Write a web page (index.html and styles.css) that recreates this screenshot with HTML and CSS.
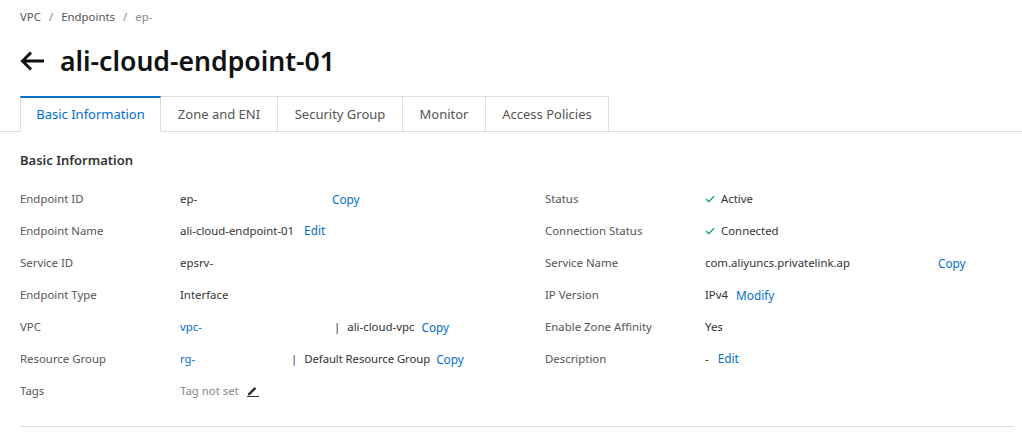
FILE: index.html
```html
<!DOCTYPE html>
<html lang="en">
<head>
<meta charset="utf-8">
<title>Endpoint</title>
<link rel="stylesheet" href="styles.css">
</head>
<body>
<nav class="crumbs"><span>VPC</span><span class="sep">/</span><span>Endpoints</span><span class="sep">/</span><span class="muted">ep-</span></nav>
<header class="title">
  <svg class="back" width="26" height="20" viewBox="0 0 26 20"><path d="M24 10H3M11 1.500L2.500 10l8.500 8.500" fill="none" stroke="#111" stroke-width="3"/></svg>
  <h1>ali-cloud-endpoint-01</h1>
</header>
<div class="tabs">
  <div class="tab active">Basic Information</div>
  <div class="tab">Zone and ENI</div>
  <div class="tab">Security Group</div>
  <div class="tab">Monitor</div>
  <div class="tab">Access Policies</div>
</div>
<h2>Basic Information</h2>
<section class="info">
  <div class="col">
    <div class="row"><div class="label">Endpoint ID</div><div class="value"><span class="w-id">ep-</span><a class="link copy">Copy</a></div></div>
    <div class="row"><div class="label">Endpoint Name</div><div class="value"><span>ali-cloud-endpoint-01</span><a class="link wide">Edit</a></div></div>
    <div class="row"><div class="label">Service ID</div><div class="value"><span>epsrv-</span></div></div>
    <div class="row"><div class="label">Endpoint Type</div><div class="value"><span>Interface</span></div></div>
    <div class="row"><div class="label">VPC</div><div class="value"><a class="link plain w-vpc">vpc-</a><span class="pipe">|</span><span>ali-cloud-vpc</span><a class="link copy">Copy</a></div></div>
    <div class="row"><div class="label">Resource Group</div><div class="value"><a class="link plain w-rg">rg-</a><span class="pipe purple">|</span><span class="tight">Default Resource Group</span><a class="link copy near">Copy</a></div></div>
    <div class="row"><div class="label">Tags</div><div class="value"><span class="muted">Tag not set</span>
      <svg class="pen" width="12" height="12" viewBox="0 0 12 12"><path d="M1 8.500 7.500 2l1.800 1.800L2.800 10.300H1zM0 11h12v1H0z" fill="#333"/></svg></div></div>
  </div>
  <div class="col">
    <div class="row"><div class="label">Status</div><div class="value"><svg class="check" width="10" height="8" viewBox="0 0 10 8"><path d="M1 4l2.800 2.800L9 1.200" fill="none" stroke="#16a870" stroke-width="1.300"/></svg><span>Active</span></div></div>
    <div class="row"><div class="label">Connection Status</div><div class="value"><svg class="check" width="10" height="8" viewBox="0 0 10 8"><path d="M1 4l2.800 2.800L9 1.200" fill="none" stroke="#16a870" stroke-width="1.300"/></svg><span>Connected</span></div></div>
    <div class="row"><div class="label">Service Name</div><div class="value"><span class="w-svc">com.aliyuncs.privatelink.ap</span><a class="link copy">Copy</a></div></div>
    <div class="row"><div class="label">IP Version</div><div class="value"><span>IPv4</span><a class="link copy modify">Modify</a></div></div>
    <div class="row"><div class="label">Enable Zone Affinity</div><div class="value"><span>Yes</span></div></div>
    <div class="row"><div class="label">Description</div><div class="value"><span>-</span><a class="link wide narrow">Edit</a></div></div>
  </div>
</section>
<hr class="rule">
</body>
</html>
```
FILE: styles.css
```css
* { box-sizing: border-box; }
html, body { margin: 0; }
body {
  width: 1022px;
  height: 432px;
  overflow: hidden;
  padding: 9px 0 0 20px;
  background: #fff;
  color: #333;
  font: 11.400px/16px "Noto Sans", "Open Sans", sans-serif;
}
.crumbs { display: flex; gap: 8px; height: 16px; color: #555; }
.crumbs .sep { color: #888; }
.muted { color: #888; }
.title { display: flex; align-items: center; gap: 14px; height: 44px; margin-top: 14px; }
.back { flex: none; }
h1 { margin: 0; font-size: 26.600px; line-height: 44px; font-weight: 600; color: #111; }
.tabs {
  display: grid;
  grid-template-columns: 141px 117px 125px 83px 123px;
  justify-content: start;
  height: 36px;
  margin-top: 13px;
  margin-left: -20px;
  padding-left: 20px;
  border-bottom: 1px solid #ddd;
}
.tab {
  height: 36px;
  line-height: 35px;
  text-align: center;
  font-size: 13px;
  color: #555;
  border: 1px solid #ddd;
  border-left: 0;
}
.tab.active {
  color: #0070cc;
  border-left: 1px solid #ddd;
  border-top: 2px solid #0070cc;
  border-bottom-color: #fff;
  line-height: 33px;
}
h2 { margin: 20px 0 0; font-size: 13px; line-height: 16px; font-weight: 600; color: #333; }
.info { display: flex; margin-top: 15px; }
.col { flex: none; width: 525px; }
.row { display: flex; height: 32px; line-height: 32px; }
.label { width: 160px; color: #555; }
.value { display: flex; align-items: baseline; color: #333; }
.link { font-size: 11.800px; line-height: 16px; color: #0070cc; }
.copy { margin-left: 7px; position: relative; top: 1px; }
.near { margin-left: 6px; }
.modify { margin-left: 8px; }
.wide { margin-left: 10px; }
.narrow { margin-left: 9px; }
.link.plain { font-size: 11.400px; }
.w-id { width: 145px; }
.w-vpc { width: 154px; }
.w-rg { width: 111px; }
.w-svc { width: 226px; }
.tight { letter-spacing: -0.100px; }
.pipe { margin-right: 7px; }
.purple { color: #6a1b7a; }
.pen { margin-left: 8px; align-self: center; }
.check { margin-right: 6px; }
.rule { width: 994px; margin: 19px 0 0; border: 0; border-top: 1px solid #ddd; }
```
